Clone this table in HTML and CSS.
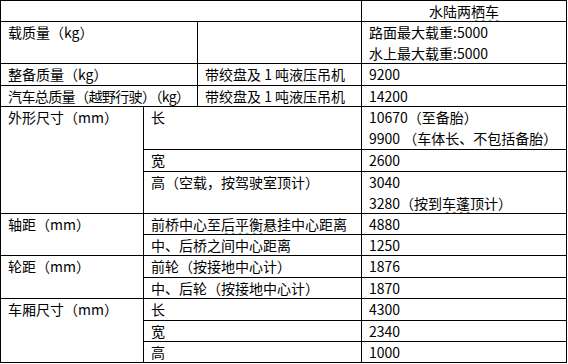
FILE: index.html
```html
<!DOCTYPE html>
<html lang="zh-CN">
<head>
<meta charset="utf-8">
<title>水陆两栖车</title>
<link rel="stylesheet" href="styles.css">
</head>
<body>
<div class="sheet">
  <div class="c s3"></div>
  <div class="c center">水陆两<span class="green">栖车</span></div>

  <div class="c s2">载质量（kg）</div>
  <div class="c"></div>
  <div class="c">路面最大载重:5000<br>水上最大载重:5000</div>

  <div class="c s2">整备质量（kg）</div>
  <div class="c">带绞盘及 1 吨液压吊机</div>
  <div class="c">9200</div>

  <div class="c s2 tight">汽车总质量（越野行驶）（kg）</div>
  <div class="c">带绞盘及 1 吨液压吊机</div>
  <div class="c">14200</div>

  <div class="c r3">外形尺寸（mm）</div>
  <div class="c s2">长</div>
  <div class="c">10670（至备胎）<br>9900 （车体长、不包括备胎）</div>
  <div class="c s2">宽</div>
  <div class="c">2600</div>
  <div class="c s2">高（空载，按驾驶室顶计）</div>
  <div class="c">3040<br>3280（按到<span class="red">车蓬</span>顶计）</div>

  <div class="c r2">轴距（mm）</div>
  <div class="c s2">前桥中心至<span class="green">后平衡</span>悬挂中心距离</div>
  <div class="c">4880</div>
  <div class="c s2">中、后桥之间中心距离</div>
  <div class="c">1250</div>

  <div class="c r2">轮距（mm）</div>
  <div class="c s2">前轮（按接地中心计）</div>
  <div class="c">1876</div>
  <div class="c s2">中、后轮（按接地中心计）</div>
  <div class="c">1870</div>

  <div class="c r3">车厢尺寸（mm）</div>
  <div class="c s2">长</div>
  <div class="c">4300</div>
  <div class="c s2">宽</div>
  <div class="c">2340</div>
  <div class="c s2">高</div>
  <div class="c">1000</div>
</div>
</body>
</html>
```

FILE: styles.css
```css
html, body {
  margin: 0;
  padding: 0;
  background: #fff;
}

.sheet {
  display: grid;
  width: 567px;
  box-sizing: border-box;
  padding: 1px;
  gap: 1px;
  background: #000;
  grid-template-columns: 142px 53px 163px 1fr;
  grid-template-rows: 20px 41px 21px 20px 42px 21px 41px 20px 20px 21px 20px 21px 20px 20px;
  font-family: "Noto Sans CJK SC", sans-serif;
  font-size: 14px;
  line-height: 21px;
  color: #000;
}

.c {
  background: #fff;
  padding: 0 0 0 7px;
  white-space: nowrap;
  overflow: hidden;
}

.s2 { grid-column: span 2; }
.s3 { grid-column: span 3; }
.r2 { grid-row: span 2; }
.r3 { grid-row: span 3; }

.center {
  text-align: center;
  padding: 0;
}

.tight {
  letter-spacing: -0.6px;
}

.green {
  text-decoration: underline wavy #3a9a3a;
  text-decoration-thickness: 1px;
  text-underline-offset: 2px;
}

.red {
  text-decoration: underline wavy #e02020;
  text-decoration-thickness: 1px;
  text-underline-offset: 2px;
}
```
